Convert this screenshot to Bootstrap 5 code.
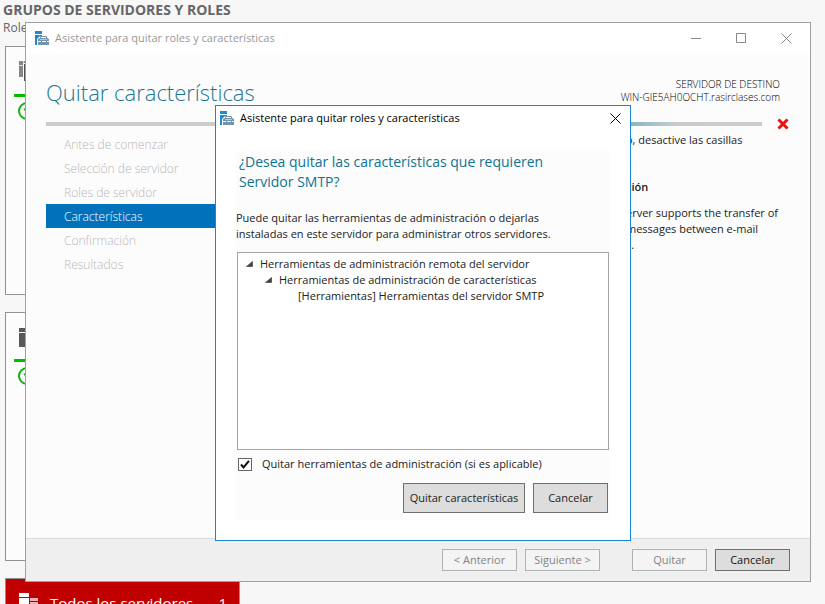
<!DOCTYPE html>
<html lang="es">
<head>
<meta charset="utf-8">
<meta name="viewport" content="width=device-width, initial-scale=1">
<title>Asistente para quitar roles y características</title>
<link href="https://cdn.jsdelivr.net/npm/bootstrap@5.3.0/dist/css/bootstrap.min.css" rel="stylesheet">
<style>
body{font-family:"Open Sans","Noto Sans",sans-serif;font-size:11px;line-height:16px;color:#222;background:#f7f7f7}
.desktop{height:100vh}
.groups-title{font-size:14px;line-height:20px;color:#666;padding-left:3px}
.groups-sub{font-size:12px;line-height:16px;color:#666;padding-left:3px;margin-bottom:10px}
.tiles{gap:17px;padding-left:5px}
.tile{width:235px;height:249px;border:1px solid #919191;background:#fcfcfc;padding:13px 8px}
.tile svg{display:block}
.tile-alert{background:#c00000;color:#fff;padding:14px 12px 0 13px;font-size:15px;line-height:20px}
.tile-alert svg{margin-right:11px}
.wizard{top:22px;left:25px;right:14px;background:#fcfcfc;border:1px solid #a0a0a0}
.wiz-bar{height:30px;color:#999;padding-left:9px;padding-right:18px}
.win-icon{margin-right:6px}
.win-btn{background:none;border:0;padding:0;line-height:0;color:inherit}
.wiz-ctl{gap:34px}
.wiz-main{height:485px;padding:24px 30px 0 20px}
.wiz-title{font-size:22px;line-height:30px;font-weight:300;color:#1b7691}
.dest{font-size:10px;line-height:13px;font-weight:300;color:#000;padding-top:1px}
.rule{height:4px;background:linear-gradient(90deg,#ccc 0,#ccc 55%,#6bacc0 79%,#c8cccd 88%,#ccc 100%);margin-right:15px}
.rule-row{height:12px;margin-right:-9px;margin-top:11px}
.steps{width:185px;margin-top:2px}
.steps a{display:block;height:24px;font-size:12px;line-height:26px;font-weight:300;padding-left:18px;color:#b8b8b8;text-decoration:none}
.steps a.current{background:#0072bc;color:#fff}
.detail{width:154px;padding-top:2px;line-height:16px}
.detail p{margin-bottom:31px}
.detail h2{font-size:11px;line-height:16px;font-weight:600;margin-bottom:10px}
.wiz-foot{height:43px;background:#efefef;border-top:1px solid #dadada;padding:0 20px;gap:8px}
.wbtn{border:1px solid #707070;background:#ddd;color:#111;border-radius:0;padding:0;font-size:11px;line-height:20px;width:75px;height:22px}
.wbtn:disabled{border-color:#adb2b5;background:#f4f4f4;color:#838383;opacity:1}
.split{margin-left:24px}
.prompt{top:105px;left:215px;width:416px;background:#fff;border:1px solid #1883d7;padding:0 21px 20px 20px}
.prompt-bar{height:24px;color:#000;margin:0 -12px 21px -16px}
.prompt-main{background:#fcfcfc;padding:1px 0 6px}
.prompt h1{font-size:14px;line-height:20px;font-weight:400;color:#0f7391;padding:0 3px;margin-bottom:18px}
.prompt p{margin-bottom:10px}
.tree{height:198px;border:1px solid #a5a5a5;background:#fff;padding:3px 8px;list-style:none;margin:0 0 0 1px}
.tree ul{list-style:none;padding-left:19px;margin:0}
.tree span{display:flex;align-items:center}
.tree svg{margin-right:7px}
.tree .leaf{padding-left:14px}
.opt{padding:6px 2px 0;gap:10px;height:22px}
.opt input{appearance:none;width:14px;height:13px;margin:0;border:1px solid #666;border-radius:0;background:#fff url("data:image/svg+xml,%3Csvg xmlns='http://www.w3.org/2000/svg' viewBox='0 0 12 11'%3E%3Cpath d='M2 5.5 4.5 8.5 10 1.8' fill='none' stroke='%23111' stroke-width='2'/%3E%3C/svg%3E") center/12px 11px no-repeat}
.prompt-btns{gap:8px;margin-top:11px;padding:0 1px 1px}
.prompt-btns .wbtn{height:30px;line-height:28px;color:#222}
.prompt-btns .wide{width:122px}
</style>
</head>
<body>
<svg class="d-none" aria-hidden="true">
  <symbol id="wizard-icon" viewBox="0 0 14 14"><path d="M0 0h7v3H0zM0 4h7v1H5L2 8v6H0z" fill="#1c8ad8"/><path d="M3 8l2-1h7l2 1v6H3z" fill="#7593a8"/><path d="M5.500 7V5.500h6V7" fill="none" stroke="#7593a8"/><path d="M3 10.500h3M7 10.500h4M12 10.500h2" stroke="#eef3f6"/><path d="M5 8.500h7" stroke="#b9c8d3"/></symbol>
  <symbol id="tri" viewBox="0 0 7 6"><path d="M6.500.5v5h-6z" fill="#444" stroke="#333" stroke-width=".6"/></symbol>
</svg>
<div class="desktop position-relative overflow-hidden">
  <div class="groups-title fw-bold">GRUPOS DE SERVIDORES Y ROLES</div>
  <div class="groups-sub">Roles</div>
  <div class="tiles d-flex flex-column">
    <div class="tile">
      <svg width="30" height="64" viewBox="0 0 30 64"><path d="M5 1h12v16H5z" fill="#858585"/><path d="M5 5.500h5M9.500 1v4" stroke="#ddd"/><path d="M9.500 3.500h12v18h-12z" fill="#4f4f4f" stroke="#fff"/><path d="M0 34h30v3H0z" fill="#00bd00"/><circle cx="13" cy="51" r="8" fill="none" stroke="#0eb10e" stroke-width="2"/><path d="M14 55v-8l-4 3" fill="none" stroke="#0eb10e" stroke-width="2"/></svg>
    </div>
    <div class="tile">
      <svg width="30" height="64" viewBox="0 0 30 64"><path d="M5 2h14v4H5zM5 7h14v14H5z" fill="#58585a"/><circle cx="15" cy="13" r="4" fill="#aaa"/><path d="M0 33h30v3H0z" fill="#00bd00"/><circle cx="13" cy="50" r="8" fill="none" stroke="#0eb10e" stroke-width="2"/><path d="M14 54v-8l-4 3" fill="none" stroke="#0eb10e" stroke-width="2"/></svg>
    </div>
    <div class="tile tile-alert d-flex align-items-start">
      <svg width="20" height="22" viewBox="0 0 20 22"><path d="M0 0h10v4H0zM0 5h10v17H0z" fill="#fff"/><path d="M11 5h8v3h-8zM11 9h8v13h-8z" fill="#eeb5b5"/></svg>
      <span>Todos los servidores</span><span class="ms-auto">1</span>
    </div>
  </div>

  <section class="wizard position-absolute">
    <header class="wiz-bar bg-white d-flex align-items-center">
      <svg class="win-icon" width="14" height="14"><use href="#wizard-icon"/></svg>
      <span>Asistente para quitar roles y características</span>
      <div class="wiz-ctl d-flex ms-auto">
        <button class="win-btn" aria-label="Minimizar"><svg width="11" height="11"><path d="M0 5.500h10" stroke="#888"/></svg></button>
        <button class="win-btn" aria-label="Maximizar"><svg width="11" height="11"><path d="M.5.5h9v9h-9z" fill="none" stroke="#888"/></svg></button>
        <button class="win-btn" aria-label="Cerrar"><svg width="11" height="11"><path d="M.5.5l10 10M10.500.5l-10 10" stroke="#888"/></svg></button>
      </div>
    </header>
    <div class="wiz-main">
      <div class="d-flex justify-content-between">
        <h1 class="wiz-title mb-0 flex-shrink-0">Quitar características</h1>
        <div class="dest text-end">SERVIDOR DE DESTINO<br>WIN-GIE5AH0OCHT.rasirclases.com</div>
      </div>
      <div class="rule-row d-flex align-items-center">
        <div class="rule flex-grow-1"></div>
        <svg width="12" height="12" viewBox="0 0 12 12" role="img" aria-label="Error"><path d="M1.500 1.500l9 9M10.500 1.500l-9 9" stroke="#f00f0f" stroke-width="3"/></svg>
      </div>
      <div class="d-flex justify-content-between">
        <nav class="steps">
          <a href="#">Antes de comenzar</a>
          <a href="#">Selección de servidor</a>
          <a href="#">Roles de servidor</a>
          <a href="#" class="current" aria-current="step">Características</a>
          <a href="#">Confirmación</a>
          <a href="#">Resultados</a>
        </nav>
        <div class="detail text-nowrap">
          <p>o, desactive las casillas</p>
          <h2>ción</h2>
          <div>erver supports the transfer of<br>messages between e-mail<br>s.</div>
        </div>
      </div>
    </div>
    <footer class="wiz-foot d-flex align-items-center justify-content-end">
      <button class="btn wbtn" disabled>&lt; Anterior</button>
      <button class="btn wbtn" disabled>Siguiente &gt;</button>
      <button class="btn wbtn split" disabled>Quitar</button>
      <button class="btn wbtn">Cancelar</button>
    </footer>
  </section>

  <section class="prompt position-absolute" role="dialog" aria-labelledby="prompt-name">
    <header class="prompt-bar d-flex align-items-center">
      <svg class="win-icon" width="14" height="14"><use href="#wizard-icon"/></svg>
      <span id="prompt-name">Asistente para quitar roles y características</span>
      <button class="win-btn ms-auto" aria-label="Cerrar"><svg width="11" height="11"><path d="M.5.5l10 10M10.500.5l-10 10" stroke="#000"/></svg></button>
    </header>
    <div class="prompt-main">
      <h1>¿Desea quitar las características que requieren<br>Servidor SMTP?</h1>
      <p>Puede quitar las herramientas de administración o dejarlas<br>instaladas en este servidor para administrar otros servidores.</p>
      <ul class="tree">
        <li><span><svg width="7" height="6"><use href="#tri"/></svg>Herramientas de administración remota del servidor</span>
          <ul><li><span><svg width="7" height="6"><use href="#tri"/></svg>Herramientas de administración de características</span>
            <ul><li><span class="leaf">[Herramientas] Herramientas del servidor SMTP</span></li></ul></li></ul></li>
      </ul>
      <div class="opt d-flex align-items-center">
        <input type="checkbox" id="tools" checked>
        <label for="tools">Quitar herramientas de administración (si es aplicable)</label>
      </div>
      <div class="prompt-btns d-flex justify-content-end">
        <button class="btn wbtn wide">Quitar características</button>
        <button class="btn wbtn">Cancelar</button>
      </div>
    </div>
  </section>
</div>
<script src="https://cdn.jsdelivr.net/npm/bootstrap@5.3.0/dist/js/bootstrap.bundle.min.js"></script>
</body>
</html>
